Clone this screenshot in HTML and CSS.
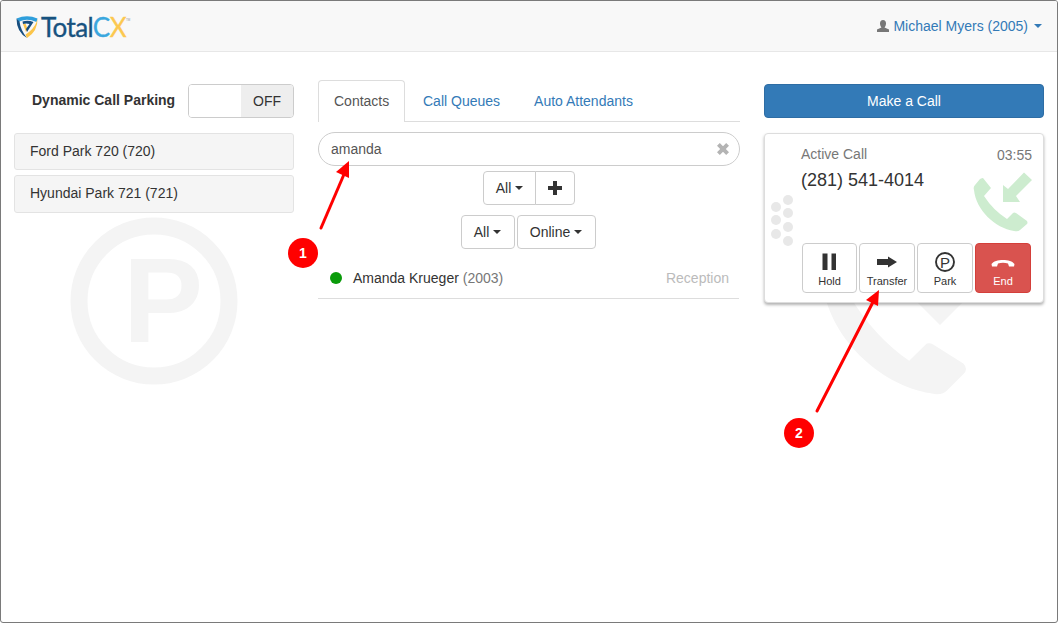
FILE: index.html
```html
<!DOCTYPE html>
<html lang="en">
<head>
<meta charset="utf-8">
<title>TotalCX</title>
<link rel="stylesheet" href="styles.css">
</head>
<body>
<div class="window">
  <header class="topbar">
    <div class="logo">
      <svg class="logo-mark" viewBox="0 0 22 23" width="22" height="23">
        <path class="lm-blue" d="M0.500 3.500 Q11 -1 21.500 3.500 L20.500 7 Q11 3 3.500 6.500 L3 7Z"/>
        <path class="lm-navy" d="M0.500 3.500 L3.500 6.500 Q4.500 15 11 23 Q0.500 17 0.500 3.500Z"/>
        <path class="lm-yellow" d="M21.500 3.500 Q22 16 11 23 L9.500 19.500 Q18 14 20.500 7Z"/>
        <path class="lm-yellow" d="M7 9 L9.500 8.500 L11.500 14 L10 17Z"/>
        <path class="lm-navy" d="M6.500 6.500 Q12 5 17.500 7 L11 17 L10 14 L13.500 9 Q10 8 7 9Z"/>
      </svg>
      <span class="logo-text"><span class="lt-total">Total</span><span class="lt-c">C</span><span class="lt-x">X</span></span><span class="logo-tm">TM</span>
    </div>
    <a class="user">
      <svg class="user-icon" viewBox="0 0 12 12" width="12" height="12"><path d="M6 0 C8 0 9 1.500 9 3.500 C9 5.500 8 7 7.500 7.500 L12 9.500 V12 H0 V9.500 L4.500 7.500 C4 7 3 5.500 3 3.500 C3 1.500 4 0 6 0Z"/></svg>
      <span>Michael Myers (2005)</span>
      <i class="caret caret-link"></i>
    </a>
  </header>

  <main class="columns">
    <section class="col-left">
      <div class="park-head">
        <strong class="park-label">Dynamic Call Parking</strong>
        <div class="toggle"><span class="toggle-blank"></span><span class="toggle-off">OFF</span></div>
      </div>
      <div class="park-item">Ford Park 720 (720)</div>
      <div class="park-item">Hyundai Park 721 (721)</div>
    </section>

    <section class="col-mid">
      <nav class="tabs">
        <a class="tab tab-active">Contacts</a>
        <a class="tab">Call Queues</a>
        <a class="tab">Auto Attendants</a>
      </nav>
      <div class="search">
        <span>amanda</span>
        <svg viewBox="0 0 12 12" width="12" height="12"><path class="x-icon" d="M2.800 0 L6 3.200 L9.200 0 L12 2.800 L8.800 6 L12 9.200 L9.200 12 L6 8.800 L2.800 12 L0 9.200 L3.200 6 L0 2.800Z"/></svg>
      </div>
      <div class="btn-row">
        <div class="btn-group">
          <button class="btn btn-all">All<i class="caret"></i></button>
          <button class="btn btn-plus"><svg viewBox="0 0 14 14" width="14" height="14"><path class="plus-icon" d="M5 0 H9 V5 H14 V9 H9 V14 H5 V9 H0 V5 H5Z"/></svg></button>
        </div>
      </div>
      <div class="btn-row btn-row-split">
        <button class="btn btn-all2">All<i class="caret"></i></button>
        <button class="btn btn-online">Online<i class="caret"></i></button>
      </div>
      <div class="contact">
        <i class="status-dot"></i>
        <span class="contact-name">Amanda Krueger <span class="contact-ext">(2003)</span></span>
        <span class="contact-group">Reception</span>
      </div>
    </section>

    <section class="col-right">
      <button class="make-call">Make a Call</button>
      <div class="call-card">
        <div class="call-top">
          <span class="call-state">Active Call</span>
          <span class="call-time">03:55</span>
        </div>
        <div class="call-number">(281) 541-4014</div>
        <div class="call-actions">
          <button class="act act-first">
            <svg class="act-icon" viewBox="0 0 20 20" width="20" height="20"><path class="ink" d="M2.500 1.500 H7.500 V18 H2.500Z M11.500 1.500 H16 V18 H11.500Z"/></svg>
            Hold
          </button>
          <button class="act">
            <svg class="act-icon" viewBox="0 0 20 20" width="20" height="20"><path class="ink" d="M0 7 H11 V4.500 L20 10 L11 15.500 V13 H0Z"/></svg>
            Transfer
          </button>
          <button class="act">
            <svg class="act-icon" viewBox="0 0 20 20" width="20" height="20"><circle class="ring" cx="10" cy="10" r="9"/><text class="ring-p" x="10" y="15.500">P</text></svg>
            Park
          </button>
          <button class="act act-end">
            <svg class="act-icon" viewBox="0 0 24 20" width="24" height="20"><path class="white" d="M0.500 12 C4 6.500 20 6.500 23.500 12 L23 14.500 H18 L17 11.500 C14 10.500 10 10.500 7 11.500 L6 14.500 H1Z"/></svg>
            End
          </button>
        </div>
      </div>
    </section>
  </main>

  <svg class="wm wm-park" viewBox="0 0 168 168" width="168" height="168">
    <circle class="wm-ring" cx="84" cy="84" r="75"/>
    <text class="wm-p" x="93" y="125">P</text>
  </svg>
  <svg class="wm wm-phone" viewBox="0 0 54 54" width="146" height="146"><path class="wm-fill" d="M10 0 L18 10 L11 17 Q20 32 33 41 L39 35 Q40 34 42 35 L53 42 Q55 44 53 46 L47 52 Q45 54 41 53 C22 50 3 32 1 12 Q0 9 2 7 L8 1 Q9 0 10 0Z"/></svg>
  <svg class="wm wm-v" viewBox="0 0 44 24" width="44" height="24"><path class="wm-fill" d="M0 0 H44 L22 22Z"/></svg>

  <svg class="overlay-marks" viewBox="0 0 1058 623" width="1058" height="623">
    <path class="arrow-line" d="M321 228 L345 172"/>
    <path class="arrow-head" d="M349 161 L349 178 L336 172Z"/>
    <path class="arrow-line" d="M817 411 L873 302"/>
    <path class="arrow-head" d="M879 290 L878 306 L866 300Z"/>
    <circle class="badge" cx="303" cy="253" r="15"/>
    <text class="badge-num" x="303" y="258">1</text>
    <circle class="badge" cx="799" cy="433" r="15"/>
    <text class="badge-num" x="799" y="438">2</text>
    <g class="dots">
      <circle cx="788" cy="200" r="5"/><circle cx="776" cy="207" r="5"/><circle cx="788" cy="213" r="5"/><circle cx="776" cy="220" r="5"/><circle cx="788" cy="227" r="5"/><circle cx="776" cy="234" r="5"/><circle cx="788" cy="241" r="5"/>
    </g>
    <g class="call-in">
      <path transform="translate(973 178)" d="M10 0 L18 10 L11 18 Q20 32 34 41 L40 35 Q41 34 43 35 L54 43 Q55 45 54 46 L47 52 Q45 54 41 53 C22 50 3 32 1 12 Q0 9 2 7 L7 1 Q9 0 10 0Z"/>
      <path d="M1003 202 V185 L1008 189 L1024 172.500 L1032 180 L1016 196 L1020 202Z"/>
    </g>
  </svg>
</div>
</body>
</html>
```

FILE: styles.css
```css
* { box-sizing: border-box; }
html, body { margin: 0; padding: 0; background: #fff; }
body { font-family: "Liberation Sans", Arial, sans-serif; font-size: 14px; color: #333; }

.window {
  position: relative;
  width: 1058px;
  height: 623px;
  border: 1px solid #7a7a7a;
  border-radius: 3px;
  overflow: hidden;
  background: #fff;
}

/* top bar */
.topbar {
  height: 51px;
  background: #f8f8f8;
  border-bottom: 1px solid #e7e7e7;
  display: flex;
  align-items: center;
  justify-content: space-between;
  padding: 0 15px;
}
.logo { display: flex; align-items: center; height: 24px; margin-top: 1px; }
.logo-mark { display: block; margin-right: 3px; }
.lm-blue { fill: #2f9fdc; }
.lm-yellow { fill: #fbc54a; }
.lm-navy { fill: #174f80; }
.logo-text { font-family: "Lato", sans-serif; font-size: 26px; line-height: 24px; letter-spacing: -0.6px; -webkit-text-stroke: 0.35px; }
.lt-total { color: #17527f; }
.lt-c { color: #3aa7de; }
.lt-x { color: #fcc84f; }
.logo-tm { font-size: 3px; color: #999; align-self: flex-start; margin-top: 3px; }
.user { display: flex; align-items: center; color: #337ab7; margin-top: -1px; }
.user-icon { fill: #777; margin-right: 4px; }
.caret {
  display: inline-block;
  width: 0;
  height: 0;
  margin-left: 4px;
  vertical-align: middle;
  border-top: 4px solid #333;
  border-left: 4px solid transparent;
  border-right: 4px solid transparent;
}
.caret-link { border-top-color: #337ab7; margin-left: 6px; }

/* columns */
.columns {
  position: relative;
  z-index: 1;
  display: grid;
  grid-template-columns: 280px 422px 280px;
  column-gap: 24px;
  padding: 28px 0 0 13px;
}

/* left */
.col-left { padding-top: 4px; }
.park-head { display: flex; align-items: center; justify-content: space-between; height: 34px; margin-bottom: 15px; }
.park-label { margin-left: 18px; font-size: 14px; margin-top: -3px; }
.toggle { display: flex; width: 106px; height: 34px; border: 1px solid #ccc; border-radius: 4px; overflow: hidden; }
.toggle-blank { flex: 1; background: #fff; }
.toggle-off { width: 52px; background: #eee; display: flex; align-items: center; justify-content: center; }
.park-item {
  height: 37px;
  margin-bottom: 5px;
  padding: 0 0 2px 15px;
  display: flex;
  align-items: center;
  background: #f5f5f5;
  border: 1px solid #e3e3e3;
  border-radius: 3px;
}
.park-item:last-child { height: 38px; }

/* middle */
.tabs { display: flex; height: 42px; border-bottom: 1px solid #ddd; }
.tab { height: 42px; padding: 0 15px 2px 17px; display: flex; align-items: center; color: #337ab7; border: 1px solid transparent; border-bottom: 0; }
.tab-active { width: 87px; padding: 0 15px 2px; color: #555; background: #fff; border-color: #ddd; border-radius: 4px 4px 0 0; }
.search {
  height: 34px;
  margin-top: 10px;
  padding: 0 10px 0 12px;
  display: flex;
  align-items: center;
  justify-content: space-between;
  color: #555;
  border: 1px solid #ccc;
  border-radius: 17px;
}
.x-icon { fill: #b4b4b4; }
.btn-row { display: flex; justify-content: center; margin-top: 5px; }
.btn-row-split { margin-top: 10px; gap: 2px; margin-left: -2px; }
.btn {
  height: 34px;
  padding: 0;
  display: inline-flex;
  align-items: center;
  justify-content: center;
  font: inherit;
  color: #333;
  background: #fff;
  border: 1px solid #ccc;
  border-radius: 4px;
}
.btn-group { display: flex; }
.btn-all { width: 53px; border-radius: 4px 0 0 4px; }
.btn-plus { width: 40px; margin-left: -1px; border-radius: 0 4px 4px 0; }
.plus-icon { fill: #333; }
.btn-all2 { width: 54px; }
.btn-online { width: 79px; }
.contact {
  height: 50px;
  margin-right: 1px;
  padding: 8px 10px 0 12px;
  display: flex;
  align-items: center;
  border-bottom: 1px solid #ddd;
}
.status-dot { width: 12px; height: 12px; border-radius: 50%; background: #0a9b0a; margin-right: 11px; }
.contact-name { flex: 1; }
.contact-ext { color: #777; }
.contact-group { color: #bbb; }

/* right */
.col-right { padding-top: 4px; }
.make-call {
  display: block;
  width: 280px;
  height: 34px;
  font: inherit;
  color: #fff;
  background: #337ab7;
  border: 1px solid #2e6da4;
  border-radius: 4px;
}
.call-card {
  height: 170px;
  margin-top: 15px;
  padding: 13px 11px 0 36px;
  background: #fff;
  border: 1px solid #ddd;
  border-radius: 4px;
  box-shadow: 0 2px 3px rgba(0,0,0,.3);
}
.call-top { display: flex; justify-content: space-between; line-height: 14px; color: #777; }
.call-time { margin-top: 1px; }
.call-number { font-size: 18px; line-height: 20px; margin-top: 8px; color: #333; }
.call-actions { display: flex; gap: 2px; margin-top: 53px; margin-right: 1px; justify-content: flex-end; }
.act {
  width: 56px;
  height: 50px;
  padding: 0;
  display: flex;
  flex-direction: column;
  align-items: center;
  font: 11px/12px "Liberation Sans", Arial, sans-serif;
  color: #333;
  background: #fff;
  border: 1px solid #ccc;
  border-radius: 4px;
}
.act-first { width: 55px; }
.act-icon { display: block; margin-top: 8px; margin-bottom: 3px; }
.act-end { color: #fff; background: #d9534f; border-color: #d43f3a; }
.ink { fill: #333; }
.white { fill: #fff; }
.ring { fill: none; stroke: #333; stroke-width: 1.9; }
.ring-p { font-size: 15px; fill: #333; text-anchor: middle; }

/* watermarks */
.wm { position: absolute; z-index: 0; }
.wm-park { left: 69px; top: 216px; }
.wm-ring { fill: none; stroke: #f4f4f4; stroke-width: 17; }
.wm-p { font-size: 120px; font-weight: bold; fill: #f4f4f4; text-anchor: middle; }
.wm-phone { left: 819px; top: 249px; }
.wm-v { left: 917px; top: 302px; }
.wm-fill { fill: #f4f4f4; }

/* annotations */
.overlay-marks { position: absolute; left: -1px; top: -1px; z-index: 2; pointer-events: none; }
.arrow-line { fill: none; stroke: #f00; stroke-width: 3; stroke-linecap: round; }
.arrow-head { fill: #f00; }
.badge { fill: #f00; }
.badge-num { font: bold 14px "Liberation Sans", Arial, sans-serif; fill: #fff; text-anchor: middle; }
.dots circle { fill: #e8e8e8; }
.call-in { fill: #cdeccf; }
```
